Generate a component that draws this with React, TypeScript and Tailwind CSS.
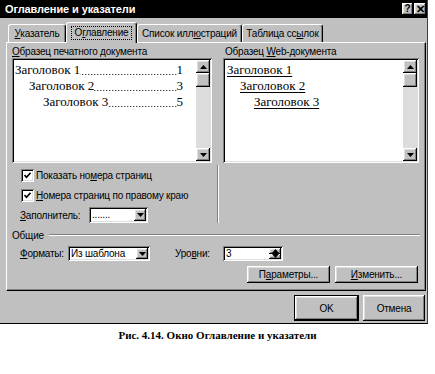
import type { ReactNode } from "react";

const raised =
  "bg-[#c0c0c0] shadow-[inset_-1px_-1px_#000,inset_1px_1px_#fff,inset_-2px_-2px_#808080,inset_2px_2px_#dfdfdf]";
const sunken =
  "shadow-[inset_1px_1px_#808080,inset_-1px_-1px_#fff,inset_2px_2px_#000,inset_-2px_-2px_#dfdfdf]";

function U({ children }: { children: ReactNode }) {
  return <span className="underline underline-offset-[1px]">{children}</span>;
}

function Tri({ up }: { up?: boolean }) {
  return (
    <svg width="7" height="4" viewBox="0 0 7 4">
      <path d={up ? "M3.5 0L7 4H0z" : "M0 0h7L3.5 4z"} fill="#000" />
    </svg>
  );
}

function ScrollBar() {
  return (
    <div className="flex w-[14px] shrink-0 flex-col bg-[#dcdcdc]">
      <div className={`flex h-[13px] items-center justify-center ${raised}`}>
        <Tri up />
      </div>
      <div className={`h-[14px] ${raised}`} />
      <div className="flex-1" />
      <div className={`flex h-[13px] items-center justify-center ${raised}`}>
        <Tri />
      </div>
    </div>
  );
}

function Combo({ className, text }: { className: string; text: string }) {
  return (
    <div className={`flex bg-white p-[2px] ${sunken} ${className}`}>
      <span className="flex-1 pl-[1px] leading-[11px]">{text}</span>
      <div className={`flex w-[12px] items-center justify-center ${raised}`}>
        <Tri />
      </div>
    </div>
  );
}

function CheckBox() {
  return (
    <div className={`flex h-[13px] w-[13px] shrink-0 items-center justify-center bg-white ${sunken}`}>
      <svg width="7" height="7" viewBox="0 0 7 7">
        <path d="M0.5 3l2 2.2L6.5 0.8" stroke="#000" strokeWidth="1.6" fill="none" />
      </svg>
    </div>
  );
}

// dotted tab leader drawn as a background so it never gets clipped
function TocLine({ indent, title, page }: { indent: string; title: string; page: string }) {
  return (
    <div className={`flex h-[16px] min-w-0 items-center whitespace-nowrap ${indent}`}>
      <span className="shrink-0">{title}</span>
      <div className="mt-[8px] h-[1px] min-w-0 flex-1 bg-[linear-gradient(90deg,transparent_2px,#000_2px)] bg-[length:3px_1px] bg-right bg-repeat-x" />
      <span className="shrink-0">{page}</span>
    </div>
  );
}

function Tab({ w, children, active }: { w: string; children: ReactNode; active?: boolean }) {
  if (active) {
    return (
      <div
        className={`relative z-10 flex h-[21px] items-start justify-center rounded-t-[3px] border-t border-l border-r border-t-white border-l-white border-r-black bg-[#c0c0c0] pt-[3px] shadow-[inset_-1px_0_#808080] ${w}`}
      >
        <span className="border border-dotted border-black px-[3px] leading-[12px]">{children}</span>
      </div>
    );
  }
  return (
    <div
      className={`flex h-[19px] items-start justify-center rounded-t-[3px] border-t border-l border-r border-t-white border-l-white border-r-black bg-[#c0c0c0] pt-[3px] shadow-[inset_-1px_0_#808080] ${w}`}
    >
      <span className="leading-[12px]">{children}</span>
    </div>
  );
}

export default function App() {
  return (
    <div className="h-[374px] w-[435px] bg-white font-['Liberation_Sans',sans-serif] text-[10px] tracking-[-0.2px] text-black">
      <div className="flex h-[324px] w-[428px] flex-col border-r border-b border-r-[#404040] border-b-black bg-[#c0c0c0]">
        {/* title bar */}
        <div className="flex h-[18px] items-center justify-between bg-black pr-[1px] pl-[5px]">
          <span className="text-[11px] font-bold tracking-[-0.1px] text-white">Оглавление и указатели</span>
          <div className="flex gap-[1px]">
            <div className={`flex h-[12px] w-[11px] items-center justify-center text-[10px] font-bold leading-none ${raised}`}>?</div>
            <div className={`flex h-[12px] w-[12px] items-center justify-center text-[11px] font-bold leading-none ${raised}`}>✕</div>
          </div>
        </div>

        {/* tabs */}
        <div className="mt-[4px] flex h-[21px] items-end pl-[8px]">
          <Tab w="w-[58px]">
            <U>У</U>казатель
          </Tab>
          <Tab w="w-[71px]" active>
            О<U>г</U>лавление
          </Tab>
          <Tab w="w-[105px]">
            Список илл<U>ю</U>страций
          </Tab>
          <Tab w="w-[81px]">
            Таблица сс<U>ы</U>лок
          </Tab>
        </div>

        {/* panel */}
        <div className="-mt-px ml-[6px] h-[249px] w-[420px] border-t border-l border-r border-b border-t-white border-l-white border-r-black border-b-black shadow-[inset_-1px_-1px_#808080]">
          <div className="flex flex-col pt-[3px]">
            <div className="flex">
              <div className="ml-[5px] w-[200px]">
                <div className="h-[12px] leading-[12px]">
                  <U>О</U>бразец печатного документа
                </div>
                <div className={`flex h-[105px] p-[2px] ${sunken}`}>
                  <div className="min-w-0 flex-1 overflow-hidden bg-white pt-[2px] pr-[13px] font-['Liberation_Serif',serif] text-[13px] tracking-normal">
                    <TocLine indent="pl-[1px]" title="Заголовок 1" page="1" />
                    <TocLine indent="pl-[15px]" title="Заголовок 2" page="3" />
                    <TocLine indent="pl-[29px]" title="Заголовок 3" page="5" />
                  </div>
                  <ScrollBar />
                </div>
              </div>
              <div className="ml-[11px] w-[196px]">
                <div className="h-[12px] pl-[2px] leading-[12px]">
                  Образец <U>W</U>eb-документа
                </div>
                <div className={`flex h-[105px] p-[2px] ${sunken}`}>
                  <div className="min-w-0 flex-1 bg-white pt-[2px] font-['Liberation_Serif',serif] text-[13px] tracking-normal">
                    <div className="h-[16px] pl-[2px] leading-[16px]">
                      <span className="underline underline-offset-[2px]">Заголовок 1</span>
                    </div>
                    <div className="h-[16px] pl-[15px] leading-[16px]">
                      <span className="underline underline-offset-[2px]">Заголовок 2</span>
                    </div>
                    <div className="h-[16px] pl-[29px] leading-[16px]">
                      <span className="underline underline-offset-[2px]">Заголовок 3</span>
                    </div>
                  </div>
                  <ScrollBar />
                </div>
              </div>
            </div>

            {/* options */}
            <div className="mt-[2px] h-[58px] w-[212px] border-r border-r-white pt-[4px] shadow-[inset_-1px_0_#808080]">
              <div className="flex h-[13px] items-center gap-[2px] pl-[14px]">
                <CheckBox />
                <span>
                  Показать но<U>м</U>ера страниц
                </span>
              </div>
              <div className="mt-[7px] flex h-[13px] items-center gap-[2px] pl-[14px]">
                <CheckBox />
                <span>
                  <U>Н</U>омера страниц по правому краю
                </span>
              </div>
              <div className="mt-[5px] flex h-[16px] items-center pl-[13px]">
                <span className="w-[69px]">
                  <U>З</U>аполнитель:
                </span>
                <Combo className="h-[16px] w-[59px]" text="......." />
              </div>
            </div>

            {/* general group */}
            <div className="mt-[6px] flex h-[12px] items-center pl-[5px]">
              <span>Общие</span>
              <div className="mr-[5px] ml-[5px] h-[2px] flex-1 border-t border-b border-t-[#808080] border-b-white" />
            </div>
            <div className="mt-[5px] flex h-[15px] items-center pl-[13px]">
              <span className="w-[48px]">
                <U>Ф</U>орматы:
              </span>
              <Combo className="h-[15px] w-[82px]" text="Из шаблона" />
              <span className="ml-[25px] w-[48px]">
                Уро<U>в</U>ни:
              </span>
              <div className={`flex h-[15px] w-[60px] bg-white p-[2px] ${sunken}`}>
                <span className="flex-1 pl-[1px] leading-[11px]">3</span>
                <div className="flex w-[12px] flex-col">
                  <div className={`flex flex-1 items-center justify-center ${raised}`}>
                    <Tri up />
                  </div>
                  <div className={`flex flex-1 items-center justify-center ${raised}`}>
                    <Tri />
                  </div>
                </div>
              </div>
            </div>
            <div className="mt-[5px] flex justify-end gap-[5px] pr-[7px]">
              <div className={`flex h-[17px] w-[83px] items-center justify-center ${raised}`}>
                <span>
                  П<U>а</U>раметры...
                </span>
              </div>
              <div className={`flex h-[17px] w-[83px] items-center justify-center ${raised}`}>
                <span>
                  <U>И</U>зменить...
                </span>
              </div>
            </div>
          </div>
        </div>

        {/* dialog buttons */}
        <div className="mt-[4px] flex justify-end gap-[4px] pr-[2px]">
          <div className="h-[26px] w-[65px] border border-black">
            <div className={`flex h-full w-full items-center justify-center ${raised}`}>OK</div>
          </div>
          <div className={`flex h-[26px] w-[62px] items-center justify-center ${raised}`}>Отмена</div>
        </div>
      </div>

      <div className="mt-[5px] text-center font-['Liberation_Serif',serif] text-[11px] leading-[13px] font-bold tracking-normal">
        Рис. 4.14. Окно Оглавление и указатели
      </div>
    </div>
  );
}
